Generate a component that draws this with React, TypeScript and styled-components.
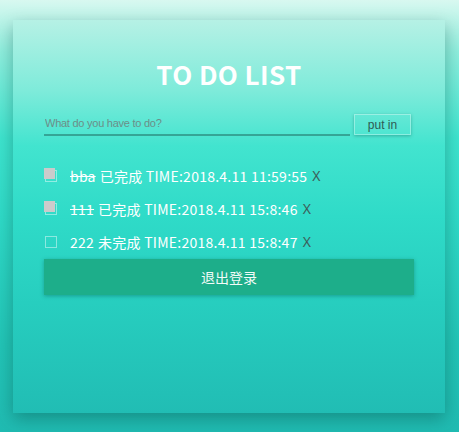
import React from 'react';
import styled, { createGlobalStyle } from 'styled-components';

const GlobalStyle = createGlobalStyle`
	html, body {
		margin: 0;
		padding: 0;
	}
	body {
		min-height: 432px;
		background: linear-gradient(180deg, #d8f8f0 0%, #8eeedd 12%, #3ee4ce 32%, #2fdac7 50%, #22c4b6 80%, #20bbb2 100%);
		font-family: "Noto Sans CJK SC", "Noto Sans", sans-serif;
	}
`;

const Page = styled.div`
	padding: 20px 0 19px 13px;
`;

const Card = styled.section`
	width: 432px;
	height: 393px;
	box-sizing: border-box;
	padding: 0 31px;
	background: linear-gradient(180deg, #b6f1e5 0%, #7eebda 18%, #42e4cf 32%, #2fdbc8 50%, #27cebf 72%, #21bdb4 100%);
	box-shadow: 0 6px 16px rgba(0, 60, 55, 0.35);
`;

const Title = styled.h1`
	margin: 0;
	padding-top: 39px;
	text-align: center;
	font-size: 26px;
	font-weight: 700;
	line-height: 30px;
	letter-spacing: 0.4px;
	color: #ffffff;
`;

const Form = styled.form`
	display: flex;
	align-items: flex-end;
	margin-top: 22px;
`;

const Input = styled.input`
	width: 306px;
	height: 25px;
	box-sizing: border-box;
	padding: 0 1px;
	border: 0;
	border-bottom: 2px solid #35a596;
	background: transparent;
	outline: none;
	font-family: "Liberation Sans", Arial, sans-serif;
	font-size: 11px;
	letter-spacing: -0.25px;
	color: #333;

	&::placeholder {
		color: #6c8e88;
	}
`;

const PutIn = styled.button`
	width: 57px;
	height: 21px;
	margin: 0 0 1px 4px;
	padding: 0;
	border: 1px solid rgba(255, 255, 255, 0.35);
	background: transparent;
	box-shadow: 0 1px 3px rgba(0, 80, 70, 0.35);
	font-family: "Liberation Sans", Arial, sans-serif;
	font-size: 12px;
	color: #2f5a54;
	cursor: pointer;
`;

const List = styled.ul`
	list-style: none;
	margin: 23px 0 0;
	padding: 0;
`;

const Item = styled.li`
	display: flex;
	align-items: center;
	height: 33px;
	font-size: 14px;
	letter-spacing: 0.25px;
	color: #ffffff;
`;

const Check = styled.span<{ $done: boolean }>`
	position: relative;
	width: 10px;
	height: 10px;
	margin: 0 13px 0 1px;
	border: 1px solid rgba(255, 255, 255, 0.45);

	&::after {
		content: '';
		display: ${(p) => (p.$done ? 'block' : 'none')};
		position: absolute;
		left: -2px;
		top: -3px;
		width: 11px;
		height: 11px;
		background: #cbcbcb;
	}
`;

const Name = styled.span<{ $done: boolean }>`
	text-decoration: ${(p) => (p.$done ? 'line-through' : 'none')};
	margin-right: 4px;
`;

const Remove = styled.span`
	margin-left: 5px;
	color: #3d5f5a;
	font-family: "Noto Sans", sans-serif;
	cursor: pointer;
`;

const Logout = styled.button`
	display: block;
	width: 370px;
	height: 36px;
	margin-top: 1px;
	border: 0;
	background: #1dae8a;
	box-shadow: 0 1px 4px rgba(0, 80, 70, 0.4);
	font-family: "Noto Sans CJK SC", sans-serif;
	font-size: 14px;
	color: #f2fbf8;
	cursor: pointer;
`;

const todos = [
	{ name: 'bba', done: true, time: '2018.4.11 11:59:55' },
	{ name: '111', done: true, time: '2018.4.11 15:8:46' },
	{ name: '222', done: false, time: '2018.4.11 15:8:47' },
];

function App() {
	return (
		<Page>
			<GlobalStyle />
			<Card>
				<Title>TO DO LIST</Title>
				<Form onSubmit={(e) => e.preventDefault()}>
					<Input placeholder="What do you have to do?" />
					<PutIn type="submit">put in</PutIn>
				</Form>
				<List>
					{todos.map((t) => (
						<Item key={t.time}>
							<Check $done={t.done} />
							<Name $done={t.done}>{t.name}</Name>
							{t.done ? '已完成' : '未完成'} TIME:{t.time}
							<Remove>X</Remove>
						</Item>
					))}
				</List>
				<Logout>退出登录</Logout>
			</Card>
		</Page>
	);
}

export default App;
